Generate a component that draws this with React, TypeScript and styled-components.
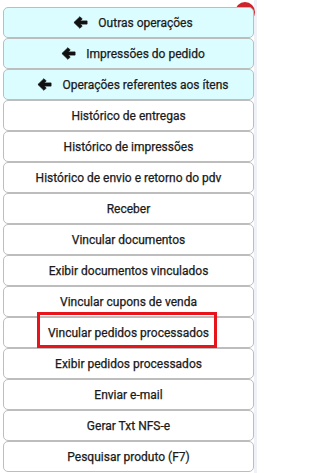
import styled, { createGlobalStyle } from "styled-components";

const GlobalStyle = createGlobalStyle`
  html, body {
    margin: 0;
    padding: 0;
    background: #ffffff;
  }
  body {
    font-family: Roboto, "Liberation Sans", Arial, sans-serif;
  }
`;

type Item = { label: string; back?: boolean; highlight?: boolean };

const items: Item[] = [
  { label: "Outras operações", back: true },
  { label: "Impressões do pedido", back: true },
  { label: "Operações referentes aos ítens", back: true },
  { label: "Histórico de entregas" },
  { label: "Histórico de impressões" },
  { label: "Histórico de envio e retorno do pdv" },
  { label: "Receber" },
  { label: "Vincular documentos" },
  { label: "Exibir documentos vinculados" },
  { label: "Vincular cupons de venda" },
  { label: "Vincular pedidos processados", highlight: true },
  { label: "Exibir pedidos processados" },
  { label: "Enviar e-mail" },
  { label: "Gerar Txt NFS-e" },
  { label: "Pesquisar produto (F7)" },
];

function ArrowLeft() {
  return (
    <ArrowIcon viewBox="0 0 16 16" aria-hidden="true">
      <polygon points="1,8 7.4,1.8 9.8,4.2 7.7,6.3 15,6.3 15,9.7 7.7,9.7 9.8,11.8 7.4,14.2" />
    </ArrowIcon>
  );
}

export default function App() {
  return (
    <>
      <GlobalStyle />
      <Page>
        <Badge />
        <Menu>
          {items.map((item) => (
            <MenuButton key={item.label} $back={item.back}>
              {item.back && <ArrowLeft />}
              {item.label}
              {item.highlight && <Marker />}
            </MenuButton>
          ))}
        </Menu>
      </Page>
    </>
  );
}

const Page = styled.div`
  position: relative;
  width: 257px;
  height: 473px;
  overflow: hidden;
  background: linear-gradient(to right, #ffffff 0 254px, #eef1f7 254px);
  padding: 7px 3px 0 3px;
  box-sizing: border-box;
`;

const Badge = styled.div`
  position: absolute;
  top: 2px;
  left: 235px;
  width: 20px;
  height: 20px;
  border-radius: 50%;
  background: #d0222a;
`;

const Menu = styled.div`
  position: relative;
  display: flex;
  flex-direction: column;
  width: 251px;
`;

const MenuButton = styled.div<{ $back?: boolean }>`
  position: relative;
  display: flex;
  align-items: center;
  justify-content: center;
  gap: 10px;
  height: 31px;
  box-sizing: border-box;
  border: 1px solid #bdbdbd;
  border-radius: 5px;
  background: ${(p) => (p.$back ? "#dcfdff" : "#ffffff")};
  color: #1a1a1a;
  font-size: 12px;
  font-weight: 400;
  -webkit-text-stroke: 0.25px #1a1a1a;
  white-space: nowrap;
  padding-left: ${(p) => (p.$back ? "9px" : "0")};
`;

const ArrowIcon = styled.svg`
  width: 15px;
  height: 15px;
  fill: #111111;
  stroke: #111111;
  stroke-width: 0.8;
  stroke-linejoin: round;
  flex-shrink: 0;
`;

const Marker = styled.span`
  position: absolute;
  left: 33px;
  top: -6px;
  width: 180px;
  height: 36px;
  box-sizing: border-box;
  border: 3px solid #e8141b;
  pointer-events: none;
`;
